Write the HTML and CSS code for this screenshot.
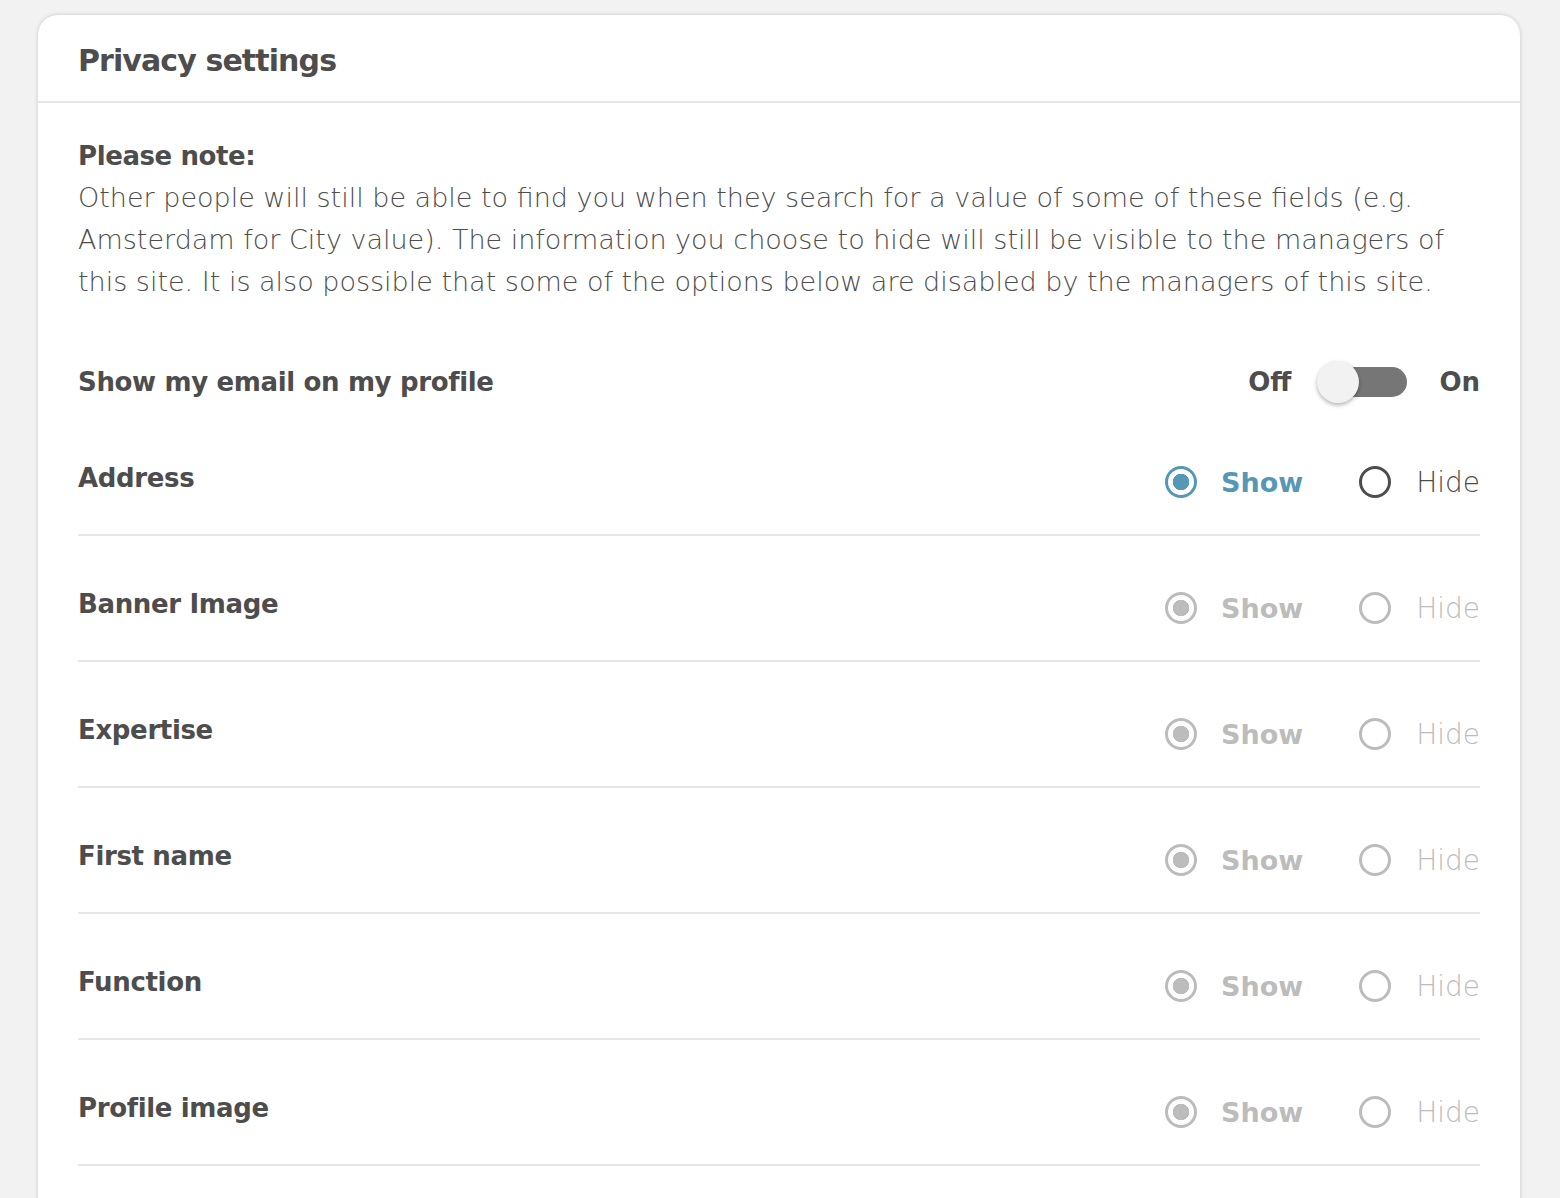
FILE: index.html
```html
<!DOCTYPE html>
<html lang="en">

<head>
  <meta charset="UTF-8">
  <meta name="viewport" content="width=device-width, initial-scale=1.0">
  <title>Privacy settings</title>
  <link rel="stylesheet" href="styles.css">
</head>

<body>
  <div class="card">
    <div class="card-header">
      <h2>Privacy settings</h2>
    </div>
    <div class="card-body">
      <p class="note">
        <strong>Please note:</strong><br>
        Other people will still be able to find you when they search for a value of some of these fields (e.g.
        Amsterdam for City value). The information you choose to hide will still be visible to the managers of
        this site. It is also possible that some of the options below are disabled by the managers of this site.
      </p>

      <div class="toggle-row">
        <span class="label">Show my email on my profile</span>
        <div class="switch">
          <span>Off</span>
          <span class="track"><span class="knob"></span></span>
          <span>On</span>
        </div>
      </div>

      <div class="row">
        <span class="label">Address</span>
        <div class="choices">
          <label class="radio checked"><span class="dot"></span>Show</label>
          <label class="radio"><span class="dot"></span>Hide</label>
        </div>
      </div>
      <div class="row disabled">
        <span class="label">Banner Image</span>
        <div class="choices">
          <label class="radio checked"><span class="dot"></span>Show</label>
          <label class="radio"><span class="dot"></span>Hide</label>
        </div>
      </div>
      <div class="row disabled">
        <span class="label">Expertise</span>
        <div class="choices">
          <label class="radio checked"><span class="dot"></span>Show</label>
          <label class="radio"><span class="dot"></span>Hide</label>
        </div>
      </div>
      <div class="row disabled">
        <span class="label">First name</span>
        <div class="choices">
          <label class="radio checked"><span class="dot"></span>Show</label>
          <label class="radio"><span class="dot"></span>Hide</label>
        </div>
      </div>
      <div class="row disabled">
        <span class="label">Function</span>
        <div class="choices">
          <label class="radio checked"><span class="dot"></span>Show</label>
          <label class="radio"><span class="dot"></span>Hide</label>
        </div>
      </div>
      <div class="row disabled">
        <span class="label">Profile image</span>
        <div class="choices">
          <label class="radio checked"><span class="dot"></span>Show</label>
          <label class="radio"><span class="dot"></span>Hide</label>
        </div>
      </div>
    </div>
  </div>
</body>

</html>
```

FILE: styles.css
```css
body {
  margin: 0;
  padding-top: 15px;
  background-color: #f2f2f2;
  font-family: "DejaVu Sans", sans-serif;
  color: #4d4d4d;
}

.card {
  width: 1482px;
  height: 1300px;
  margin-left: 38px;
  background: #fff;
  border-radius: 20px;
  box-shadow: 0 0 4px rgba(0, 0, 0, 0.18);
}

.card-header {
  height: 82px;
  padding: 4px 40px 0;
  display: flex;
  align-items: center;
  border-bottom: 2px solid #e6e6e6;
}

.card-header h2 {
  margin: 0;
  font-size: 30px;
  font-weight: bold;
  letter-spacing: -0.9px;
}

.card-body {
  padding: 32px 40px 0;
}

.note {
  margin: 0;
  font-size: 27px;
  line-height: 42px;
  font-weight: 300;
  color: #4d4d4d;
}

.note strong {
  font-weight: bold;
  font-size: 26px;
  letter-spacing: -0.4px;
}

.label {
  font-size: 26px;
  font-weight: bold;
  line-height: 32px;
  letter-spacing: -0.35px;
}

.toggle-row {
  display: flex;
  justify-content: space-between;
  align-items: center;
  height: 42px;
  margin: 58px 0 7px;
}

.switch {
  display: flex;
  align-items: center;
  font-size: 26px;
  font-weight: bold;
}

.track {
  position: relative;
  width: 88px;
  height: 30px;
  margin: 0 32px 0 28px;
  border-radius: 15px;
  background: #767676;
}

.knob {
  position: absolute;
  left: -2px;
  top: -6px;
  width: 42px;
  height: 42px;
  border-radius: 50%;
  background: #f2f2f2;
  box-shadow: 0 2px 4px rgba(0, 0, 0, 0.3);
}

.row {
  display: flex;
  justify-content: space-between;
  align-items: flex-start;
  padding: 52px 0 32px;
  border-bottom: 2px solid #e6e6e6;
}

.choices {
  display: flex;
  height: 40px;
  align-items: center;
}

.radio {
  display: flex;
  align-items: center;
  font-size: 28px;
  font-weight: 300;
  color: #4d4d4d;
}

.radio + .radio {
  margin-left: 56px;
}

.radio .dot {
  box-sizing: border-box;
  width: 32px;
  height: 32px;
  margin-right: 25px;
  border: 3px solid #4d4d4d;
  border-radius: 50%;
}

.radio.checked {
  color: #5498b6;
  font-weight: bold;
  font-size: 27px;
}

.radio.checked .dot {
  margin-right: 24px;
  border-color: #5498b6;
  background: radial-gradient(circle, #5498b6 0 8px, transparent 8.5px);
}

.disabled .radio,
.disabled .radio.checked {
  color: #bcbcbc;
}

.disabled .radio .dot {
  border-color: #bcbcbc;
}

.disabled .radio.checked .dot {
  background: radial-gradient(circle, #bcbcbc 0 8px, transparent 8.5px);
}
```
